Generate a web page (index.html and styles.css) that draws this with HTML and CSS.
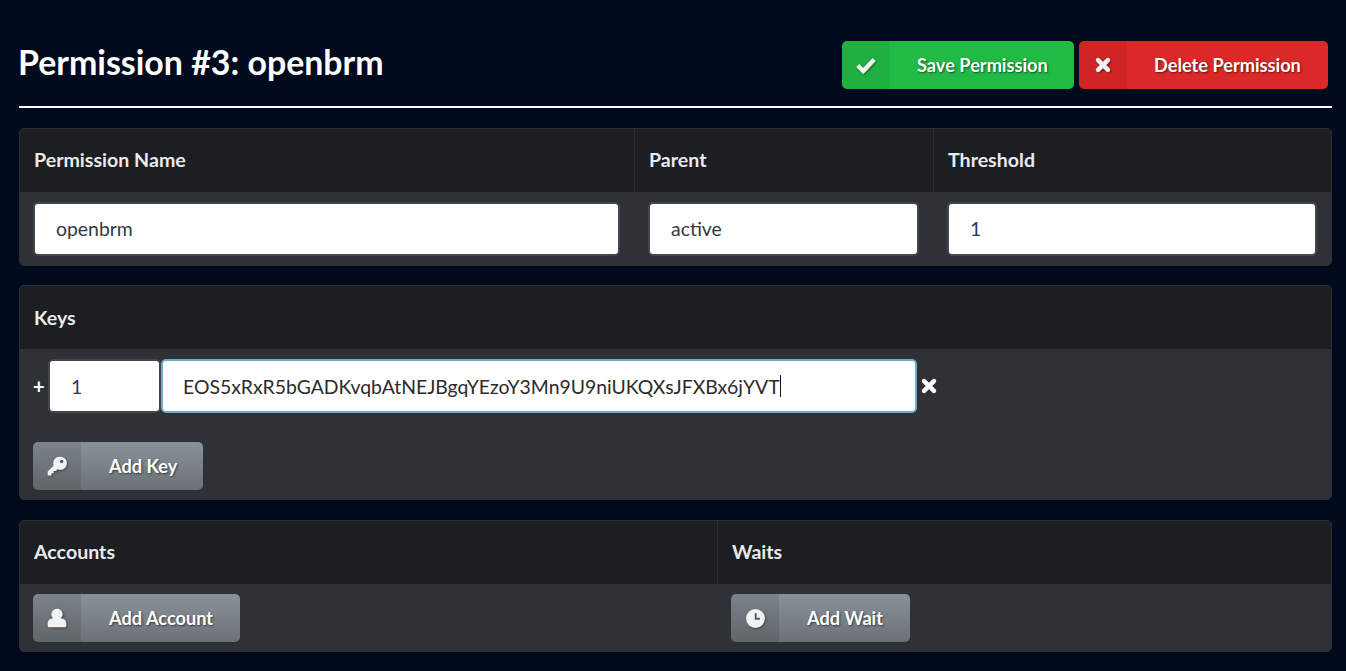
FILE: index.html
```html
<!DOCTYPE html>
<html lang="en">
<head>
<meta charset="utf-8">
<title>Permission #3: openbrm</title>
<link rel="stylesheet" href="styles.css">
</head>
<body>
<main class="page">
  <header class="head">
    <h1 class="title">Permission #3: openbrm</h1>
    <div class="actions">
      <button class="btn btn-save"><span class="btn-icon"><svg viewBox="0 0 20 20" class="ico"><path d="M2.5 10.5 7.5 15.5 17.5 5" fill="none" stroke="currentColor" stroke-width="4"/></svg></span><span class="btn-text">Save Permission</span></button>
      <button class="btn btn-delete"><span class="btn-icon"><svg viewBox="0 0 20 20" class="ico"><path d="M4.5 4.5 15.5 15.5M15.5 4.5 4.5 15.5" fill="none" stroke="currentColor" stroke-width="5" stroke-linecap="round"/></svg></span><span class="btn-text">Delete Permission</span></button>
    </div>
  </header>

  <section class="panel">
    <div class="grid grid-top">
      <div class="th">Permission Name</div>
      <div class="th">Parent</div>
      <div class="th">Threshold</div>
      <div class="td"><div class="field">openbrm</div></div>
      <div class="td"><div class="field">active</div></div>
      <div class="td"><div class="field num">1</div></div>
    </div>
  </section>

  <section class="panel panel-keys">
    <div class="th th-keys">Keys</div>
    <div class="keys">
      <div class="key-row">
        <span class="plus">+</span>
        <div class="field weight num">1</div>
        <div class="field key focus">EOS5xRxR5bGADKvqbAtNEJBgqYEzoY3Mn9U9niUKQXsJFXBx6jYVT<span class="caret"></span></div>
        <svg viewBox="0 0 20 20" class="remove"><path d="M4.5 4.5 15.5 15.5M15.5 4.5 4.5 15.5" fill="none" stroke="currentColor" stroke-width="5" stroke-linecap="round"/></svg>
      </div>
      <button class="btn btn-grey btn-key"><span class="btn-icon"><svg viewBox="0 0 20 20" class="ico"><path fill-rule="evenodd" d="M13 1.5a6 6 0 0 1 0 12c-.9 0-1.700-.2-2.400-.5L9 14.600H7v2H5v2H1.500v-3.500L7 9.600A6 6 0 0 1 13 1.500ZM14.300 4.300a1.600 1.600 0 1 0 0 3.200 1.600 1.600 0 0 0 0-3.200Z" fill="currentColor"/></svg></span><span class="btn-text">Add Key</span></button>
    </div>
  </section>

  <section class="panel">
    <div class="grid grid-bottom">
      <div class="th">Accounts</div>
      <div class="th">Waits</div>
      <div class="td td-btn"><button class="btn btn-grey btn-account"><span class="btn-icon"><svg viewBox="0 0 20 20" class="ico"><path d="M10 1.500a5 5 0 0 1 3.300 8.800c2.800.4 5.200 1.800 5.200 5v1.600c0 1-.7 1.600-1.600 1.600H3.100c-.9 0-1.600-.6-1.600-1.600v-1.600c0-3.200 2.400-4.600 5.200-5A5 5 0 0 1 10 1.500Z" fill="currentColor"/></svg></span><span class="btn-text">Add Account</span></button></div>
      <div class="td td-btn"><button class="btn btn-grey btn-wait"><span class="btn-icon"><svg viewBox="0 0 20 20" class="ico"><path fill-rule="evenodd" d="M10 1a9 9 0 1 1 0 18 9 9 0 0 1 0-18ZM9.300 5v6.200h5v-1.800h-3.200V5Z" fill="currentColor"/></svg></span><span class="btn-text">Add Wait</span></button></div>
    </div>
  </section>
</main>
</body>
</html>
```

FILE: styles.css
```css
* { box-sizing: border-box; }
html, body { margin: 0; padding: 0; }
body {
  background: #020a1e;
  font-family: Lato, "Liberation Sans", sans-serif;
  color: #fff;
  height: 671px;
  overflow: hidden;
}
.page { padding: 41px 14px 19px 19px; }
.head {
  display: flex;
  justify-content: space-between;
  height: 67px;
  border-bottom: 2px solid #fff;
  padding-right: 4px;
  margin-bottom: 20px;
}
.title {
  margin: -1px 0 0 -1px;
  font-size: 33.9px;
  line-height: 44px;
  font-weight: 700;
}
.actions { display: flex; gap: 5px; height: 48px; }
.btn {
  display: flex;
  align-items: center;
  height: 48px;
  padding: 0;
  border: 0;
  border-radius: 5px;
  color: #fff;
  font: 700 18.2px/1 Lato, "Liberation Sans", sans-serif;
  text-shadow: 1px 1px 2px rgba(0, 0, 0, .55);
  overflow: hidden;
}
.btn-icon {
  flex: none;
  display: flex;
  align-items: center;
  justify-content: center;
  width: 48px;
  height: 48px;
  background: rgba(0, 0, 0, .05);
}
.ico { width: 22px; height: 22px; filter: drop-shadow(1px 1px 1px rgba(0, 0, 0, .4)); color: #f2f2f2; }
.btn-delete .ico { width: 18px; height: 18px; }
.btn-wait .ico { width: 21px; height: 21px; }
.btn-text { flex: 1; text-align: left; padding-left: 27px; }
.btn-save { width: 232px; background: #21ba45; }
.btn-delete { width: 249px; background: #db2828; }
.btn-grey { background: linear-gradient(#8a9299, #6b7176); }
.btn-grey .btn-icon { background: rgba(0, 0, 0, .1); }
.btn-grey .btn-text { padding-left: 28px; }
.btn-key { width: 170px; }
.btn-account { width: 207px; }
.btn-wait { width: 179px; }
.panel {
  background: #2e3136;
  border: 1px solid #2c2f34;
  border-radius: 5px;
  overflow: hidden;
  margin-bottom: 19px;
}
.panel-keys { margin-bottom: 20px; }
.panel:last-child { margin-bottom: 0; }
.grid { display: grid; }
.grid-top { grid-template-columns: 614px 299px 1fr; }
.grid-bottom { grid-template-columns: 697px 1fr; }
.th {
  height: 63px;
  padding: 0 14px 2px;
  display: flex;
  align-items: center;
  background: #1d1e22;
  font-size: 19.6px;
  font-weight: 700;
  color: #e8eaec;
}
.th-keys { padding-bottom: 1px; }
.grid .th + .th { border-left: 1px solid #2c2f34; }
.td { padding: 10px 14px 9px 13px; }
.grid .td + .td { padding-left: 14px; }
.field {
  height: 54px;
  display: flex;
  align-items: center;
  padding-left: 21px;
  padding-bottom: 2px;
  background: #fff;
  border: 2px solid #43474c;
  border-radius: 5px;
  color: #303a45;
  font-size: 19.4px;
}
.num { color: #1f3a5c; }
.keys { padding: 10px 13px 10px; height: 150px; }
.key-row { display: flex; align-items: center; height: 54px; margin-bottom: 29px; }
.plus { width: 15px; font-weight: 700; font-size: 20px; }
.weight { width: 113px; padding-bottom: 0; }
.key { width: 756px; border-color: #6fa9cf; padding-left: 20px; padding-bottom: 0; }
.focus { color: #2b2b2b; }
.caret { display: inline-block; width: 1px; height: 22px; background: #111; }
.remove { width: 18px; height: 18px; margin-left: 3px; color: #fff; }
```
